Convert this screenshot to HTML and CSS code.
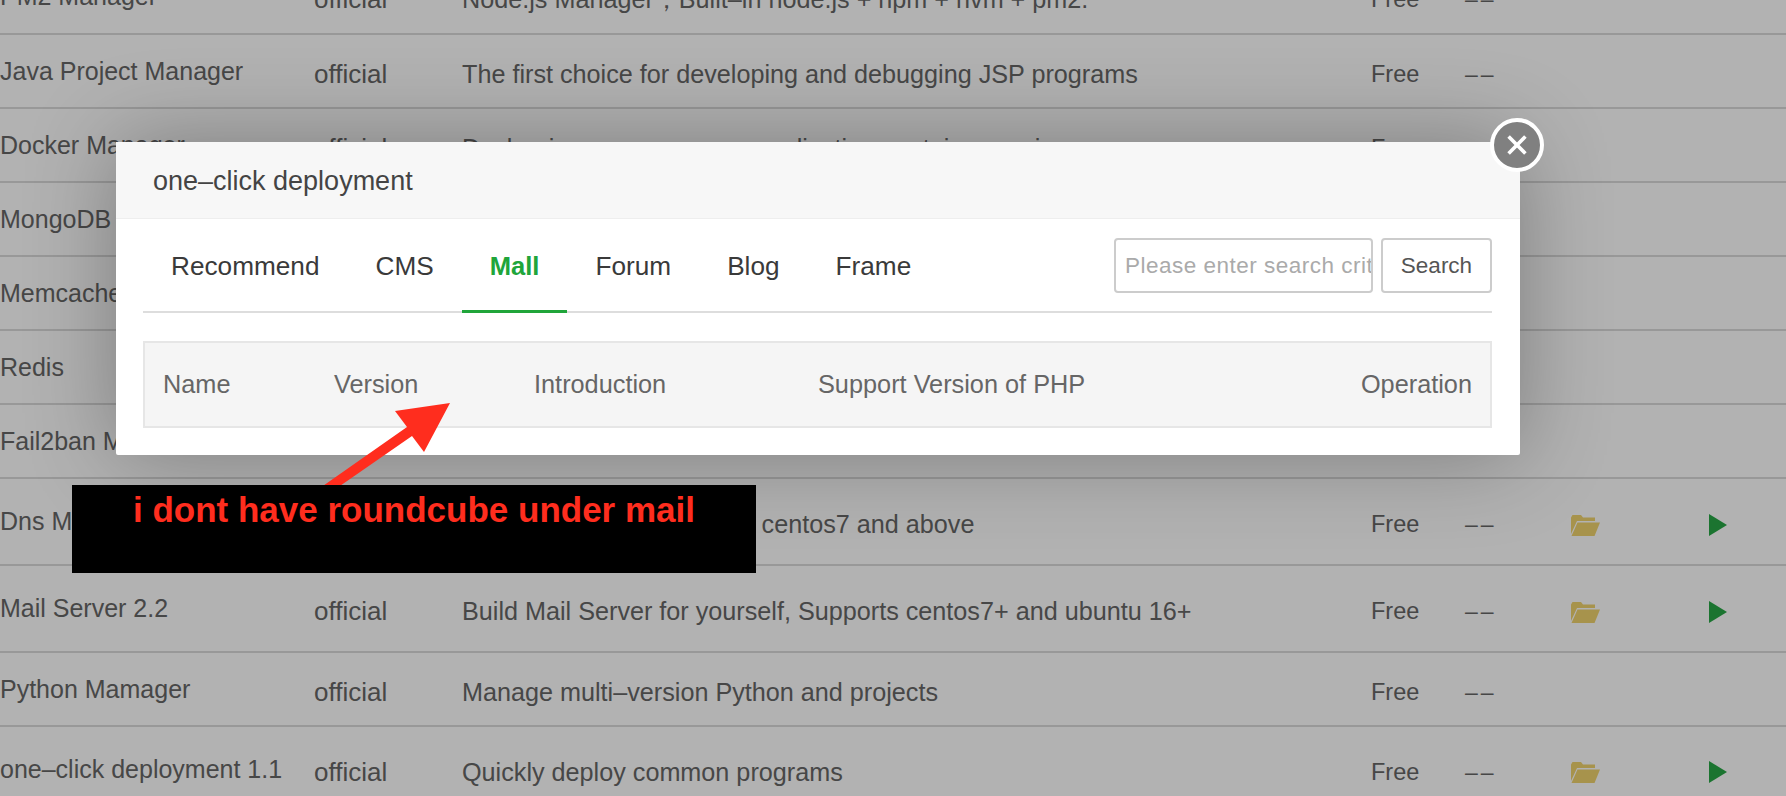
FILE: index.html
```html
<!DOCTYPE html>
<html>
<head>
<meta charset="utf-8">
<title>one-click deployment</title>
<link rel="stylesheet" href="styles.css">
</head>
<body>
<div class="page">
  <div class="list">
    <div class="row r-first"><span class="name">PM2 Manager</span><span class="type">official</span><span class="desc">Node.js Manager，Built–in node.js + npm + nvm + pm2.</span><span class="price">Free</span><span class="exp">––</span></div>
    <div class="row"><span class="name">Java Project Manager</span><span class="type">official</span><span class="desc">The first choice for developing and debugging JSP programs</span><span class="price">Free</span><span class="exp">––</span></div>
    <div class="row"><span class="name">Docker Manager</span><span class="type">official</span><span class="desc">Docker is an open source application container engine</span><span class="price">Free</span><span class="exp">––</span></div>
    <div class="row"><span class="name">MongoDB</span></div>
    <div class="row"><span class="name">Memcached</span></div>
    <div class="row"><span class="name">Redis</span></div>
    <div class="row"><span class="name">Fail2ban Manager</span></div>
    <div class="row r-tall"><span class="name">Dns Manager</span><span class="type">official</span><span class="desc">Build DNS zone, Supports centos7 and above</span><span class="price">Free</span><span class="exp">––</span>
      <span class="act"><svg class="folder" viewBox="0 0 30 22"><path d="M1 20V3.500L2.500 1H11l2 2.500h12V7H7L1 20Z"/><path d="M7.500 8.500H30L24.500 22H1.500Z"/></svg></span><span class="act2"><svg class="play" viewBox="0 0 18 22"><path d="M0 0L18 11L0 22Z"/></svg></span></div>
    <div class="row r-tall"><span class="name">Mail Server 2.2</span><span class="type">official</span><span class="desc">Build Mail Server for yourself, Supports centos7+ and ubuntu 16+</span><span class="price">Free</span><span class="exp">––</span>
      <span class="act"><svg class="folder" viewBox="0 0 30 22"><path d="M1 20V3.500L2.500 1H11l2 2.500h12V7H7L1 20Z"/><path d="M7.500 8.500H30L24.500 22H1.500Z"/></svg></span><span class="act2"><svg class="play" viewBox="0 0 18 22"><path d="M0 0L18 11L0 22Z"/></svg></span></div>
    <div class="row"><span class="name">Python Mamager</span><span class="type">official</span><span class="desc">Manage multi–version Python and projects</span><span class="price">Free</span><span class="exp">––</span></div>
    <div class="row r-last"><span class="name">one–click deployment 1.1</span><span class="type">official</span><span class="desc">Quickly deploy common programs</span><span class="price">Free</span><span class="exp">––</span>
      <span class="act"><svg class="folder" viewBox="0 0 30 22"><path d="M1 20V3.500L2.500 1H11l2 2.500h12V7H7L1 20Z"/><path d="M7.500 8.500H30L24.500 22H1.500Z"/></svg></span><span class="act2"><svg class="play" viewBox="0 0 18 22"><path d="M0 0L18 11L0 22Z"/></svg></span></div>
  </div>
  <div class="shade"></div>
  <div class="modal">
    <div class="m-title">one–click deployment</div>
    <div class="m-body">
      <div class="tabs">
        <span class="tab">Recommend</span>
        <span class="tab">CMS</span>
        <span class="tab on">Mall</span>
        <span class="tab">Forum</span>
        <span class="tab">Blog</span>
        <span class="tab">Frame</span>
        <div class="search"><input class="s-input" placeholder="Please enter search criteria"><button class="s-btn">Search</button></div>
      </div>
      <div class="thead">
        <span class="th th1">Name</span>
        <span class="th th2">Version</span>
        <span class="th th3">Introduction</span>
        <span class="th th4">Support Version of PHP</span>
        <span class="th th5">Operation</span>
      </div>
    </div>
  </div>
  <div class="close"><svg viewBox="0 0 20 20"><path d="M3 3L17 17M17 3L3 17"/></svg></div>
  <svg class="arrow" viewBox="0 0 140 90"><path d="M0 88L87 27L75 11L130 3L104 52L92 36L17 88Z"/></svg>
  <div class="note">i dont have roundcube under mail</div>
</div>
</body>
</html>
```
FILE: styles.css
```css
* { box-sizing: border-box; }
html, body { margin: 0; padding: 0; }
body { font-family: "Liberation Sans", Arial, sans-serif; background: #fff; }
.page { position: relative; width: 1786px; height: 796px; overflow: hidden; }

.list { margin-top: -40px; }
.row { display: flex; align-items: center; height: 74px; padding-top: 6px; border-bottom: 2px solid #dadada; font-size: 25px; color: #666; }
.r-first { height: 75px; }
.r-tall { height: 87px; }
.r-last { height: 84px; border-bottom: 0; }
.name { width: 314px; transform: translateY(-3px); white-space: nowrap; }
.type { width: 148px; font-size: 26px; }
.desc { width: 909px; white-space: nowrap; font-size: 25.200px; }
.price { width: 94px; font-size: 23.500px; }
.exp { width: 105px; font-size: 23px; letter-spacing: 3px; }
.act { width: 139px; display: flex; }
.act2 { display: flex; }
.folder { width: 30px; height: 22px; fill: #f0d36e; }
.play { width: 18px; height: 22px; fill: #28a745; }

.shade { position: absolute; inset: 0; background: rgba(0, 0, 0, .3); }

.modal { position: absolute; left: 116px; top: 142px; width: 1404px; height: 313px; background: #fff; border-radius: 2px; box-shadow: 0 0 90px rgba(0, 0, 0, .3); }
.m-title { height: 77px; background: #f7f7f7; border-bottom: 1px solid #eee; padding: 2px 37px 0; display: flex; align-items: center; font-size: 27px; color: #444; }
.m-body { padding: 0 28px 0 27px; }
.tabs { display: flex; height: 94px; border-bottom: 2px solid #ddd; align-items: stretch; }
.tab { padding: 4px 28px 0; font-size: 26.200px; color: #3a3a3a; display: flex; align-items: center; border-bottom: 3px solid transparent; margin-bottom: -2px; }
.tab.on { color: #20a53a; border-bottom-color: #20a53a; font-weight: bold; font-size: 25.600px; }
.search { margin-left: auto; display: flex; gap: 8px; align-items: center; }
.s-input { width: 259px; height: 55px; border: 2px solid #ccc; border-radius: 4px; padding: 2px 0 0 9px; font: 22.500px "Liberation Sans", Arial, sans-serif; letter-spacing: .5px; color: #333; background: #fff; }
.s-input::placeholder { color: #aaa; opacity: 1; }
.s-btn { width: 111px; height: 55px; border: 2px solid #ccc; border-radius: 4px; background: #fff; font: 22.500px "Liberation Sans", Arial, sans-serif; color: #555; padding: 2px 0 0; }

.thead { display: flex; align-items: center; height: 87px; margin-top: 28px; background: #f5f5f5; border: 2px solid #e6e6e6; font-size: 25.300px; color: #666; }
.th { white-space: nowrap; }
.th1 { width: 189px; padding-left: 18px; }
.th2 { width: 200px; }
.th3 { width: 284px; }
.th4 { flex: 1; }
.th5 { padding-right: 18px; }

.close { position: absolute; left: 1490px; top: 118px; width: 54px; height: 54px; border-radius: 50%; background: #808080; border: 4px solid #fff; display: flex; align-items: center; justify-content: center; }
.close svg { width: 24px; height: 24px; fill: none; stroke: #fff; stroke-width: 3; }

.arrow { position: absolute; left: 320px; top: 400px; width: 140px; height: 90px; fill: #ff2d1e; }
.note { position: absolute; left: 72px; top: 485px; width: 684px; height: 88px; background: #000; color: #ff2d1e; font-size: 35px; font-weight: bold; padding: 5px 0 0 61px; white-space: nowrap; }
```
